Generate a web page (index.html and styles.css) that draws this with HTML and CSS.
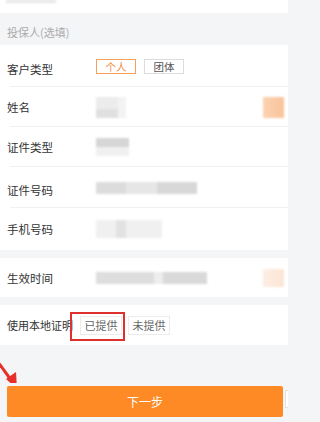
FILE: index.html
```html
<!DOCTYPE html>
<html lang="zh">
<head>
<meta charset="utf-8">
<title>投保人</title>
<link rel="stylesheet" href="styles.css">
</head>
<body>
<div class="page">
  <div class="top"><span class="ghost"></span></div>
  <div class="section-header">投保人(选填)</div>
  <div class="group">
    <div class="row row-type">
      <span class="label">客户类型</span>
      <span class="chip chip-on">个人</span>
      <span class="chip">团体</span>
    </div>
    <div class="row row-name">
      <span class="label">姓名</span>
      <span class="blur b-name"></span>
      <span class="blur b-orange"></span>
    </div>
    <div class="row row-idtype">
      <span class="label">证件类型</span>
      <span class="blur b-idtype"></span>
    </div>
    <div class="row row-idno">
      <span class="label">证件号码</span>
      <span class="blur b-idno"></span>
    </div>
    <div class="row row-phone last">
      <span class="label">手机号码</span>
      <span class="blur b-phone"></span>
    </div>
  </div>
  <div class="group gap">
    <div class="row row-date last">
      <span class="label">生效时间</span>
      <span class="blur b-date"></span>
      <span class="blur b-orange faint"></span>
    </div>
  </div>
  <div class="group gap">
    <div class="row row-proof last">
      <span class="label label-long">使用本地证明</span>
      <span class="chip chip-lg marked">已提供</span>
      <span class="chip chip-lg">未提供</span>
    </div>
  </div>
  <div class="footer">
    <svg class="arrow" width="22" height="30" viewBox="0 0 22 30">
      <line x1="-2" y1="9" x2="11" y2="27" stroke="#e8302a" stroke-width="3"/>
      <polygon points="17,36 6,26 16,19" fill="#e8302a"/>
    </svg>
    <button class="next">下一步</button>
    <span class="edge"></span>
  </div>
</div>
</body>
</html>
```

FILE: styles.css
```css
* { box-sizing: border-box; }
html, body { margin: 0; padding: 0; }
body {
  height: 422px;
  overflow: hidden;
  background: #f4f5f7;
  font-family: "Noto Sans CJK SC", "Noto Sans", sans-serif;
  color: #333;
}
.page { position: relative; width: 288px; height: 422px; }

.top {
  height: 13px;
  background: #fff;
  overflow: hidden;
  padding: 0 0 0 6px;
}
.ghost {
  display: block;
  width: 50px;
  height: 3px;
  background: #e6e6e6;
  filter: blur(0.8px);
}

.section-header {
  height: 32px;
  padding: 6px 0 0 7px;
  line-height: 26px;
  font-size: 11px;
  color: #ababab;
}

.group { background: #fff; }
.group.gap { margin-top: 8px; }

.row {
  display: flex;
  align-items: center;
  height: 41px;
  padding-left: 7px;
  position: relative;
}
.row::after {
  content: "";
  position: absolute;
  left: 10px;
  right: 0;
  bottom: 0;
  height: 1px;
  background: #f0f0f0;
}
.row.last::after { display: none; }

.row-type { height: 42px; padding-top: 5px; }
.row-name { height: 40px; }
.row-idtype { height: 40px; }
.row-idno { height: 41px; padding-top: 5px; }
.row-phone { height: 42px; }
.row-date { height: 39px; padding-top: 1px; }
.row-proof { height: 40px; }

.label {
  width: 89px;
  flex: none;
  font-size: 11.5px;
  color: #333;
}
.label-long { width: auto; font-size: 11px; margin-right: 7px; }

.chip {
  display: inline-flex;
  align-items: center;
  justify-content: center;
  width: 40px;
  height: 15px;
  border: 1px solid #dcdcdc;
  font-size: 10.5px;
  color: #555;
  margin-right: 8px;
  margin-top: -4px;
}
.chip-on {
  border-color: #f7a05c;
  color: #f58a3c;
}
.chip-lg {
  width: 42px;
  height: 19px;
  margin-top: 0;
  margin-right: 6px;
  border-color: #ececec;
  font-size: 11px;
  color: #666;
}
.marked { position: relative; }
.marked::after {
  content: "";
  position: absolute;
  left: -11px;
  top: -5px;
  right: -4px;
  bottom: -7px;
  border: 2px solid #e0302c;
}

.blur {
  display: block;
  filter: blur(1.2px);
}
.b-name {
  width: 22px;
  height: 21px;
  background: linear-gradient(#ececec 0 55%, #e0e0e0 55% 100%);
  box-shadow: 8px 0 0 #f3f3f3;
}
.b-orange {
  margin-left: auto;
  margin-right: 4px;
  width: 21px;
  height: 21px;
  background: linear-gradient(90deg, #fbd3b3, #f9c39a);
}
.b-orange.faint {
  background: linear-gradient(90deg, #fdeee3, #fce5d5);
  height: 18px;
}
.b-idtype {
  width: 33px;
  height: 18px;
  background: linear-gradient(#d6d6d6 0 50%, #f0f0f0 50% 100%);
}
.b-idno {
  width: 101px;
  height: 12px;
  margin-top: -4px;
  background: linear-gradient(90deg, #dcdcdc 0 30%, #e6e6e6 30% 60%, #d8d8d8 60% 100%);
}
.b-phone {
  width: 66px;
  height: 18px;
  background: linear-gradient(90deg, #f0f0f0 0 30%, #e2e2e2 30% 45%, #f0f0f0 45% 100%);
}
.b-date {
  width: 111px;
  height: 12px;
  background: linear-gradient(90deg, #dedede 0 52%, #ededed 52% 60%, #d9d9d9 60% 100%);
}

.footer {
  position: relative;
  padding: 41px 5px 0 7px;
}
.next {
  display: block;
  width: 100%;
  height: 31px;
  border: 0;
  border-radius: 2px;
  background: #fd8a25;
  color: #fff;
  font-family: "Noto Sans CJK SC", "Noto Sans", sans-serif;
  font-size: 12px;
  padding: 0;
}
.arrow {
  position: absolute;
  left: 0;
  top: 8px;
}
.edge {
  position: absolute;
  right: 0;
  top: 45px;
  width: 3px;
  height: 18px;
  border: 1px solid #e2e2e2;
  border-right: 0;
  background: #fff;
}
```
